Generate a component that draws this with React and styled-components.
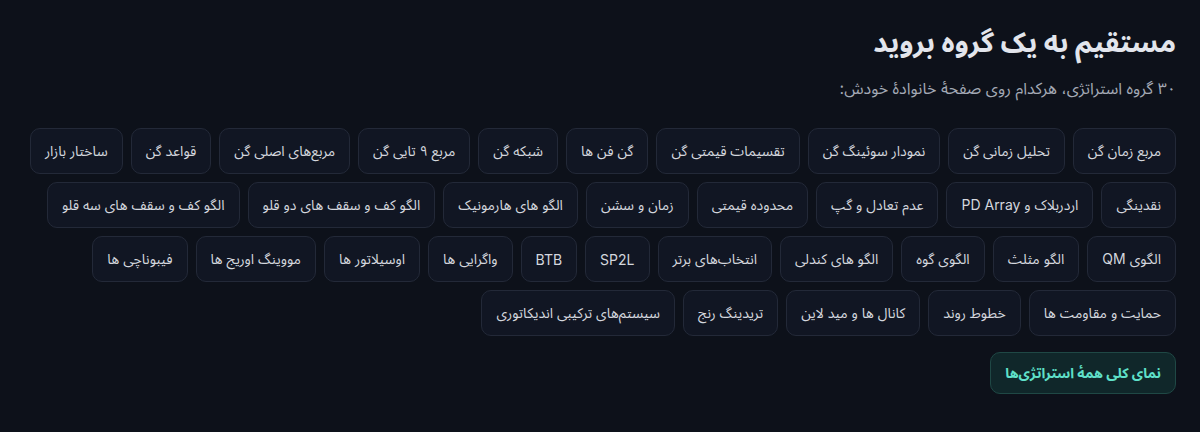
import React from "react";
import styled, { createGlobalStyle } from "styled-components";

const Global = createGlobalStyle`
  html, body { margin: 0; padding: 0; background: #0d111a; }
  body { font-family: Inter, "Noto Sans Arabic", "Vazirmatn", "DejaVu Sans", sans-serif; }
`;

const Page = styled.main`
  direction: rtl;
  background: #0d111a;
  min-height: 432px;
  box-sizing: border-box;
  padding: 22px 24px 24px;
  color: #e5e7eb;
`;

const Title = styled.h2`
  margin: 0;
  font-size: 28px;
  line-height: 40px;
  font-weight: 700;
  color: #e2e5ec;
`;

const Subtitle = styled.p`
  margin: 14px 0 0;
  font-size: 16px;
  line-height: 24px;
  color: #a3a9b5;
`;

const Grid = styled.div`
  margin-top: 28px;
  display: flex;
  flex-direction: column;
  gap: 8px;
`;

const Row = styled.div`
  display: flex;
  flex-wrap: nowrap;
  gap: 8px;
`;

const Chip = styled.a`
  display: inline-flex;
  align-items: center;
  justify-content: center;
  height: 46px;
  box-sizing: border-box;
  padding: 0 14px;
  border: 1px solid #232938;
  border-radius: 10px;
  background: #111623;
  color: #d4d7de;
  font-size: 14px;
  white-space: nowrap;
  text-decoration: none;
  cursor: pointer;
`;

const Footer = styled.div`
  margin-top: 16px;
  display: flex;
`;

const Overview = styled.a`
  display: inline-flex;
  align-items: center;
  height: 42px;
  box-sizing: border-box;
  padding: 0 14px;
  border: 1px solid #1f4845;
  border-radius: 10px;
  background: #10272a;
  color: #5fe0c9;
  font-size: 14px;
  font-weight: 700;
  text-decoration: none;
`;

const rows = [
  ["مربع زمان گن", "تحلیل زمانی گن", "نمودار سوئینگ گن", "تقسیمات قیمتی گن", "گن فن ها", "شبکه گن", "مربع ۹ تایی گن", "مربع‌های اصلی گن", "قواعد گن", "ساختار بازار"],
  ["نقدینگی", "اردربلاک و PD Array", "عدم تعادل و گپ", "محدوده قیمتی", "زمان و سشن", "الگو های هارمونیک", "الگو کف و سقف های دو قلو", "الگو کف و سقف های سه قلو"],
  ["الگوی QM", "الگو مثلث", "الگوی گوه", "الگو های کندلی", "انتخاب‌های برتر", "SP2L", "BTB", "واگرایی ها", "اوسیلاتور ها", "مووینگ اوریج ها", "فیبوناچی ها"],
  ["حمایت و مقاومت ها", "خطوط روند", "کانال ها و مید لاین", "تریدینگ رنج", "سیستم‌های ترکیبی اندیکاتوری"],
];

export default function App() {
  return (
    <>
      <Global />
      <Page>
        <Title>مستقیم به یک گروه بروید</Title>
        <Subtitle>۳۰ گروه استراتژی، هرکدام روی صفحهٔ خانوادهٔ خودش:</Subtitle>
        <Grid>
          {rows.map((r, i) => (
            <Row key={i}>
              {r.map((t) => (
                <Chip key={t}>{t}</Chip>
              ))}
            </Row>
          ))}
        </Grid>
        <Footer>
          <Overview>نمای کلی همهٔ استراتژی‌ها</Overview>
        </Footer>
      </Page>
    </>
  );
}
